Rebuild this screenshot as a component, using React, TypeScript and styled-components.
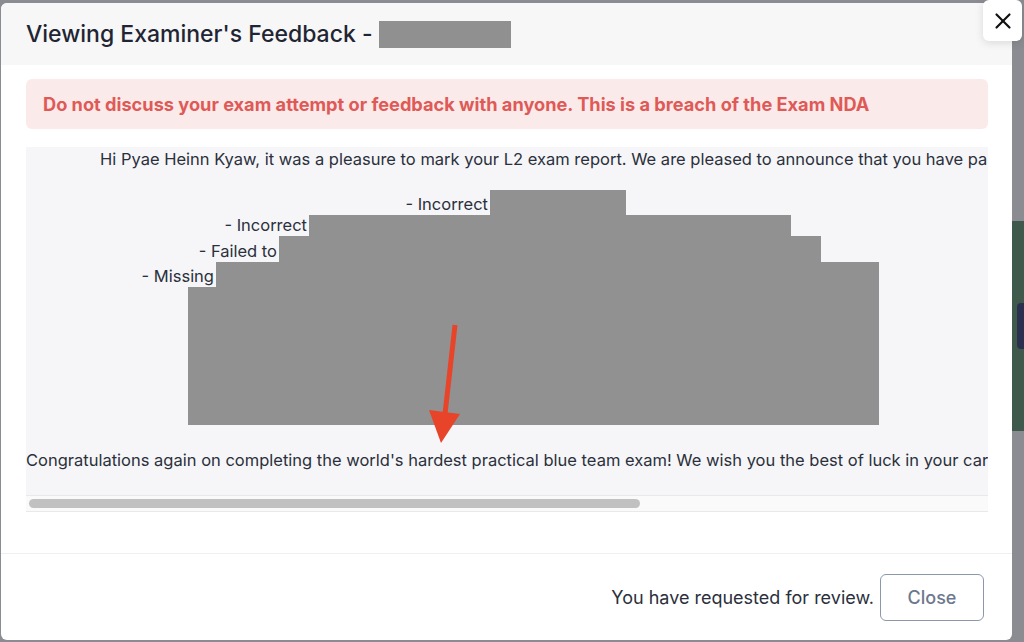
import React from "react";
import styled, { createGlobalStyle } from "styled-components";
import { X } from "lucide-react";

const Global = createGlobalStyle`
  html, body { margin: 0; padding: 0; }
  body {
    background: #8a8c91;
    font-family: Inter, "Noto Sans", "Liberation Sans", sans-serif;
    overflow: hidden;
  }
  * { box-sizing: border-box; }
`;

const Page = styled.div`
  position: relative;
  display: flex;
  width: 1024px;
  height: 642px;
  padding: 3px 0 2px 1px;
`;

const Modal = styled.div`
  width: 1011px;
  height: 637px;
  background: #ffffff;
  border-radius: 6px;
  display: flex;
  flex-direction: column;
  overflow: hidden;
`;

const Backdrop = styled.div`
  flex: 1;
  display: flex;
  flex-direction: column;
  margin-top: -3px;
`;

const BackBlock = styled.div<{ $h: number; $c: string }>`
  height: ${(p) => p.$h}px;
  background: ${(p) => p.$c};
  display: flex;
  justify-content: flex-end;
  align-items: center;
`;

const NavyTab = styled.div`
  width: 7px;
  height: 46px;
  background: #2c3050;
  border-radius: 4px 0 0 4px;
`;

const Header = styled.div`
  height: 62px;
  background: #f7f7f7;
  display: flex;
  align-items: center;
  gap: 6px;
  padding-left: 25px;
`;

const Title = styled.h1`
  margin: 0;
  font-size: 23px;
  font-weight: 500;
  color: #1f2533;
`;

const Redact = styled.div`
  width: 132px;
  height: 27px;
  background: #909090;
`;

const Body = styled.div`
  flex: 1;
  padding: 14px 24px 0 25px;
  display: flex;
  flex-direction: column;
  gap: 18px;
  border-bottom: 1px solid #efefef;
`;

const Alert = styled.div`
  height: 50px;
  background: #fbeaea;
  border-radius: 6px;
  display: flex;
  align-items: center;
  padding-left: 17px;
  color: #df5a57;
  font-weight: 700;
  font-size: 18.2px;
  white-space: nowrap;
`;

const Feedback = styled.div`
  position: relative;
  background: #f6f6f8;
  overflow: hidden;
  display: flex;
  flex-direction: column;
`;

const Para = styled.p<{ $indent: number }>`
  margin: 0;
  padding-left: ${(p) => p.$indent}px;
  font-size: 16.5px;
  line-height: 24px;
  color: #2b303c;
  white-space: nowrap;
`;

const Stairs = styled.div`
  display: flex;
  flex-direction: column;
  margin: 19px 0 23px;
`;

const StairRow = styled.div<{ $h: number }>`
  display: flex;
  height: ${(p) => p.$h}px;
`;

const StairLabel = styled.div<{ $w: number }>`
  width: ${(p) => p.$w}px;
  display: flex;
  justify-content: flex-end;
  align-items: flex-end;
  padding-right: 2px;
  padding-bottom: 1px;
  font-size: 16.5px;
  line-height: 20px;
  color: #2b303c;
  white-space: nowrap;
`;

const StairBlock = styled.div<{ $w: number }>`
  width: ${(p) => p.$w}px;
  background: #919191;
`;

const ScrollTrack = styled.div`
  margin-top: 23px;
  height: 17px;
  background: #fafafa;
  border-top: 1px solid #e9e9ec;
  border-bottom: 1px solid #e9e9ec;
  display: flex;
  align-items: center;
  padding-left: 3px;
`;

const ScrollThumb = styled.div`
  width: 611px;
  height: 9px;
  border-radius: 5px;
  background: #c1c1c1;
`;

const ArrowSvg = styled.svg`
  position: absolute;
  left: 400px;
  top: 172px;
`;

const Footer = styled.div`
  height: 86px;
  display: flex;
  align-items: center;
  justify-content: flex-end;
  gap: 6px;
  padding-right: 28px;
`;

const FooterText = styled.span`
  font-size: 18px;
  color: #2b303c;
`;

const CloseButton = styled.button`
  width: 104px;
  height: 47px;
  background: #ffffff;
  border: 1px solid #8c97ab;
  border-radius: 6px;
  color: #6c788d;
  font-family: inherit;
  font-size: 18px;
  font-weight: 500;
`;

const XButton = styled.button`
  position: absolute;
  top: 0;
  left: 983px;
  width: 39px;
  height: 41px;
  background: #ffffff;
  border: none;
  border-radius: 6px;
  box-shadow: 0 2px 8px rgba(0, 0, 0, 0.12);
  display: flex;
  align-items: center;
  justify-content: center;
  color: #111;
  padding: 0;
`;

const stairs = [
  { h: 25, label: "- Incorrect", lw: 464, bw: 136 },
  { h: 21, label: "- Incorrect", lw: 283, bw: 482 },
  { h: 26, label: "- Failed to", lw: 253, bw: 542 },
  { h: 25, label: "- Missing", lw: 190, bw: 663 },
  { h: 138, label: "", lw: 162, bw: 691 },
];

export default function App() {
  return (
    <>
      <Global />
      <Page>
        <Modal>
          <Header>
            <Title>Viewing Examiner's Feedback -</Title>
            <Redact />
          </Header>
          <Body>
            <Alert>
              Do not discuss your exam attempt or feedback with anyone. This is a breach of the Exam NDA
            </Alert>
            <Feedback>
              <Para $indent={74}>
                Hi Pyae Heinn Kyaw, it was a pleasure to mark your L2 exam report. We are pleased to announce that you have passed the exam.
              </Para>
              <Stairs>
                {stairs.map((s, i) => (
                  <StairRow key={i} $h={s.h}>
                    <StairLabel $w={s.lw}>{s.label}</StairLabel>
                    <StairBlock $w={s.bw} />
                  </StairRow>
                ))}
              </Stairs>
              <Para $indent={0}>
                Congratulations again on completing the world's hardest practical blue team exam! We wish you the best of luck in your career.
              </Para>
              <ScrollTrack>
                <ScrollThumb />
              </ScrollTrack>
              <ArrowSvg width="50" height="130" viewBox="0 0 50 130">
                <line x1="29" y1="6" x2="19" y2="95" stroke="#e8442a" strokeWidth="5" />
                <polygon points="3,91 34,95 15,124" fill="#e8442a" />
              </ArrowSvg>
            </Feedback>
          </Body>
          <Footer>
            <FooterText>You have requested for review.</FooterText>
            <CloseButton>Close</CloseButton>
          </Footer>
        </Modal>
        <Backdrop>
          <BackBlock $h={222} $c="#8a8c91" />
          <BackBlock $h={210} $c="#3f5a4c">
            <NavyTab />
          </BackBlock>
          <BackBlock $h={210} $c="#8a8c91" />
        </Backdrop>
        <XButton aria-label="Close">
          <X size={26} strokeWidth={2} />
        </XButton>
      </Page>
    </>
  );
}
